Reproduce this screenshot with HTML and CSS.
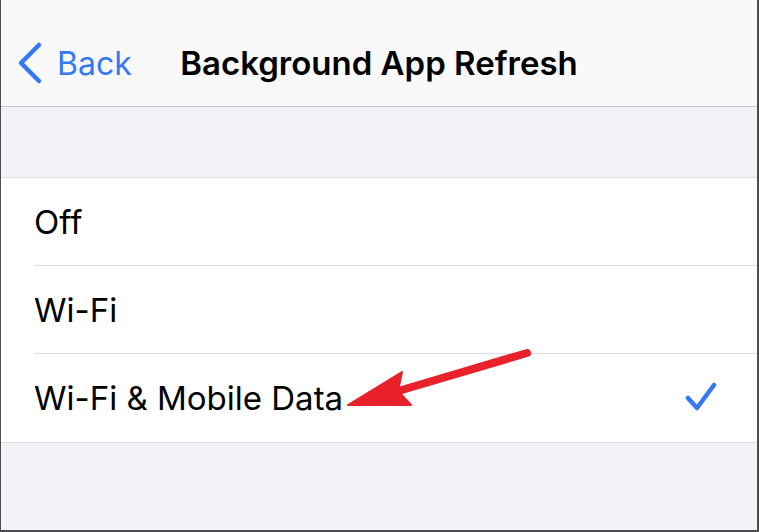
FILE: index.html
```html
<!DOCTYPE html>
<html lang="en">
<head>
    <meta charset="UTF-8">
    <title>Background App Refresh</title>
    <link rel="stylesheet" href="styles.css">
</head>
<body>
    <div class="screen">
        <div class="navbar">
            <div class="back">
                <svg class="chevron" width="28" height="44" viewBox="0 0 28 44">
                    <polyline points="22,4 4,22 22,40" fill="none" stroke="#3478f6" stroke-width="4.5" stroke-linecap="round" stroke-linejoin="round"/>
                </svg>
                <span>Back</span>
            </div>
            <div class="title">Background App Refresh</div>
            <div></div>
        </div>

        <div class="gap"></div>

        <div class="list">
            <div class="row"><div class="row-inner">Off</div></div>
            <div class="row"><div class="row-inner">Wi-Fi</div></div>
            <div class="row"><div class="row-inner">Wi-Fi &amp; Mobile Data
                <svg class="check" width="36" height="32" viewBox="0 0 36 32">
                    <polyline points="3,16 12,26 29,3" fill="none" stroke="#3478f6" stroke-width="4.5" stroke-linecap="round" stroke-linejoin="round"/>
                </svg>
            </div></div>
        </div>

        <div class="fill"></div>

        <svg class="arrow" width="759" height="532" viewBox="0 0 759 532">
            <line x1="395" y1="392" x2="527" y2="353" stroke="#e8212b" stroke-width="8" stroke-linecap="round"/>
            <polygon points="348,405 402,372 398,391 411,405" fill="#e8212b" stroke="#e8212b" stroke-width="2" stroke-linejoin="round"/>
        </svg>
    </div>
</body>
</html>
```

FILE: styles.css
```css
* {
    box-sizing: border-box;
}

body {
    margin: 0;
    font-family: Inter, "Liberation Sans", sans-serif;
}

.screen {
    position: relative;
    width: 759px;
    height: 532px;
    display: flex;
    flex-direction: column;
    background: #f2f2f7;
    border-left: 1px solid #4d4d4d;
    border-right: 2px solid #4d4d4d;
    border-bottom: 2px solid #4d4d4d;
}

.navbar {
    height: 107px;
    padding-top: 20px;
    background: #f9f9f9;
    border-bottom: 1px solid #c8c8cc;
    display: grid;
    grid-template-columns: 1fr auto 1fr;
    align-items: center;
}

.back {
    display: flex;
    align-items: center;
    padding-left: 16px;
    color: #3478f6;
    font-size: 32px;
    gap: 12px;
}

.title {
    font-size: 33px;
    font-weight: 600;
    color: #000;
}

.gap {
    height: 70px;
}

.list {
    background: #fff;
    border-top: 1px solid #dedee2;
    border-bottom: 1px solid #dedee2;
}

.row {
    padding-left: 33px;
}

.row-inner {
    height: 88px;
    display: flex;
    align-items: center;
    justify-content: space-between;
    padding-right: 36px;
    font-size: 33px;
    color: #000;
    border-bottom: 1px solid #dedee2;
}

.row:last-child .row-inner {
    border-bottom: none;
}

.fill {
    flex: 1;
}

.arrow {
    position: absolute;
    left: -1px;
    top: 0;
    pointer-events: none;
}
```
